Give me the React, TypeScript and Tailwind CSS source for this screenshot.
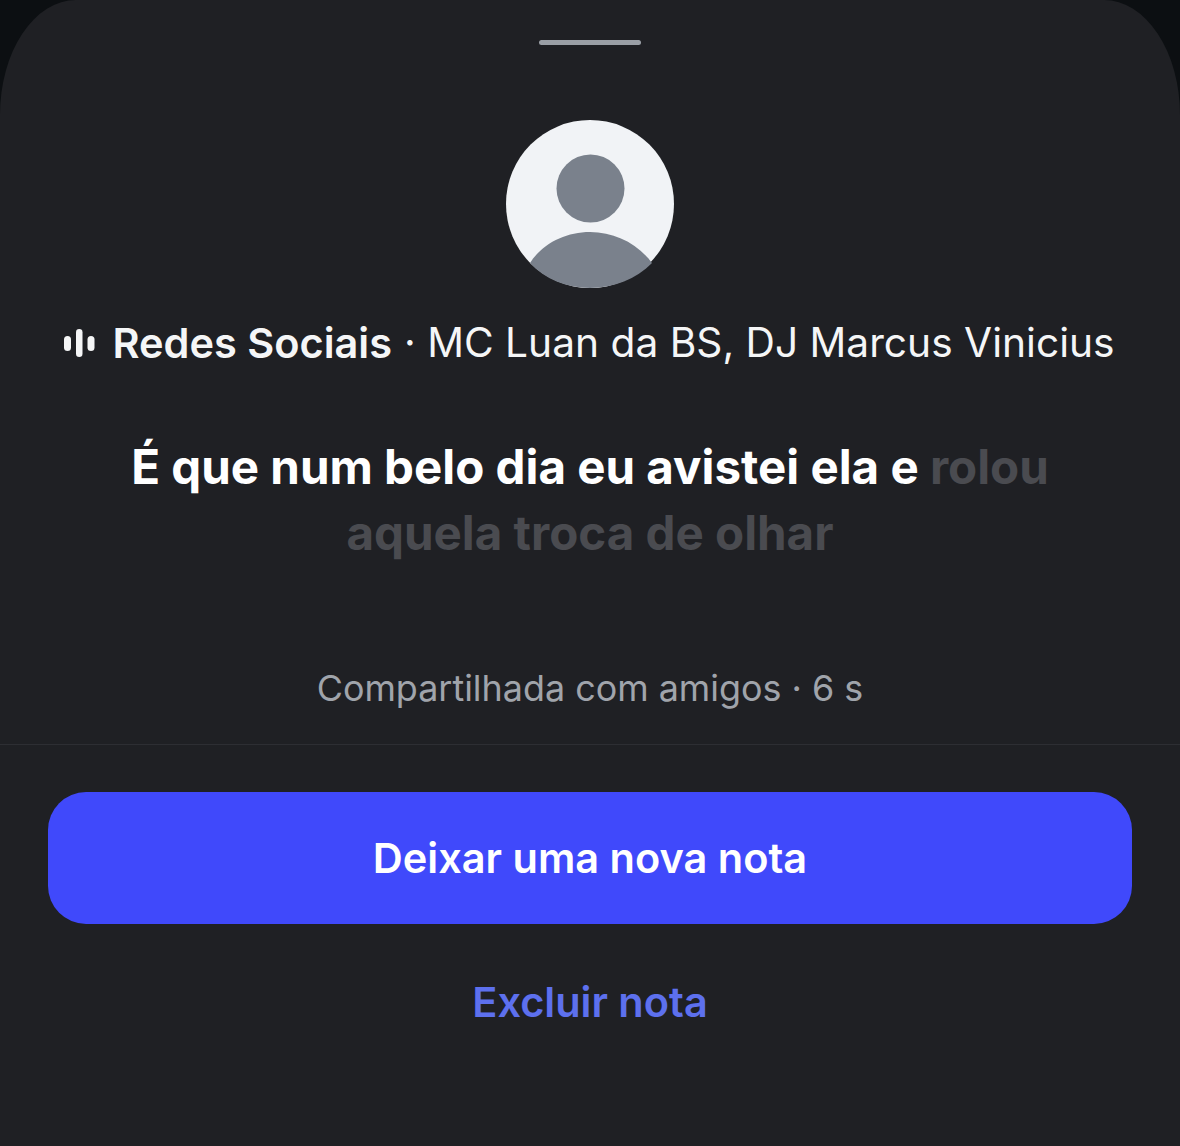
import React from 'react';

function DefaultAvatar() {
  return (
    <svg width="168" height="168" viewBox="0 0 168 168">
      <circle cx="84" cy="84" r="84" fill="#f1f3f6" />
      <circle cx="84.5" cy="68.5" r="34" fill="#7a818c" />
      <path d="M24 143 C36 124 59 112 84 112 C109 112 132 124 146 143 C130 159 108 168 84 168 C60 168 39 159 24 143 Z" fill="#7a818c" />
    </svg>
  );
}

function AudioBars() {
  return (
    <svg width="31" height="28" viewBox="0 0 31 28" fill="#f5f6f7">
      <rect x="0" y="7" width="7" height="15" rx="3.5" />
      <rect x="12" y="0" width="6.5" height="28" rx="3.25" />
      <rect x="23.5" y="7" width="7" height="15" rx="3.5" />
    </svg>
  );
}

export default function App() {
  return (
    <div className="h-[1146px] w-[1180px] overflow-hidden bg-[#0c0f12] font-['Inter','Liberation_Sans',sans-serif]">
      <div className="flex h-full flex-col items-center rounded-t-[76px_115px] bg-[#1f2024]">
        <div className="mt-[40px] h-[5px] w-[102px] rounded-full bg-[#9a9fa6]" />

        <div className="mt-[75px] h-[168px] w-[168px]">
          <DefaultAvatar />
        </div>

        <div className="mt-[30px] flex h-[50px] items-center whitespace-nowrap text-[40.7px] text-[#f5f6f7]">
          <div className="mr-[1px] -ml-[1px]">
            <AudioBars />
          </div>
          <span className="ml-[16px] text-[41.5px] font-semibold">Redes Sociais</span>
          <span className="ml-[12px]">· MC Luan da BS, DJ Marcus Vinicius</span>
        </div>

        <div className="mt-[66px] text-center text-[47.5px] leading-[65.5px] font-bold whitespace-nowrap text-white">
          <p>
            É que num belo dia eu avistei ela e <span className="text-[#4a4b50]">rolou</span>
          </p>
          <p className="text-[#4a4b50]">aquela troca de olhar</p>
        </div>

        <p className="mt-[98px] h-[50px] text-[35.9px] leading-[50px] text-[#a0a4ab]">Compartilhada com amigos · 6 s</p>

        <div className="mt-[31px] h-px w-full bg-[#2d2e33]" />

        <button className="mt-[47px] h-[132px] w-[1084px] rounded-[38px] bg-[#4049fb] text-[41.5px] font-semibold text-white">
          Deixar uma nova nota
        </button>

        <button className="mt-[53px] text-[41.5px] leading-[50px] font-semibold text-[#5d70ee]">Excluir nota</button>
      </div>
    </div>
  );
}
